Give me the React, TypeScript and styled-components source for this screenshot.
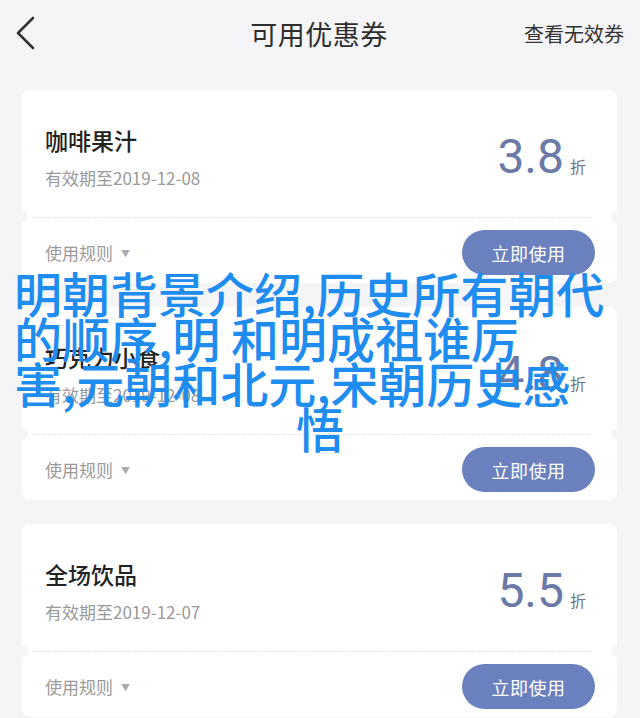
import React from "react";
import styled, { createGlobalStyle } from "styled-components";

const GlobalStyle = createGlobalStyle`
  html, body { margin: 0; padding: 0; background: #f5f5f7; }
  body { font-family: "Noto Sans CJK SC", "Noto Sans", sans-serif; }
  * { box-sizing: border-box; }
`;

const Page = styled.div`
  position: relative;
  width: 640px;
  height: 718px;
  overflow: hidden;
  background: #f5f5f7;
`;

const Header = styled.header`
  height: 66px;
  display: grid;
  grid-template-columns: 120px 1fr 120px;
  align-items: center;
  padding: 0 16px 0 14px;
`;

const BackButton = styled.button`
  width: 30px;
  height: 36px;
  padding: 0;
  border: 0;
  background: transparent;
  display: flex;
  align-items: center;
  justify-content: flex-start;
`;

const Title = styled.h1`
  margin: 0;
  text-align: center;
  font-size: 27px;
  font-weight: 400;
  color: #2e2e2e;
  letter-spacing: 0.5px;
`;

const HeaderLink = styled.span`
  text-align: right;
  font-size: 20px;
  color: #333;
  white-space: nowrap;
`;

const List = styled.main`
  display: flex;
  flex-direction: column;
  gap: 24px;
  padding: 24px 23px 0 22px;
`;

const Card = styled.section`
  position: relative;
  height: 193px;
  flex-shrink: 0;
  background: #fff;
  border-radius: 8px;
  display: flex;
  flex-direction: column;
`;

const CardTop = styled.div`
  height: 127px;
  display: flex;
  align-items: flex-start;
  justify-content: space-between;
  padding: 35px 31px 0 23px;
`;

const Info = styled.div`
  display: flex;
  flex-direction: column;
  gap: 11px;
`;

const Name = styled.div`
  font-size: 23px;
  line-height: 30px;
  color: #222;
  font-weight: 500;
`;

const Expiry = styled.div`
  font-size: 17px;
  line-height: 24px;
  color: #9a9a9a;
`;

const Price = styled.div`
  display: flex;
  align-items: baseline;
  gap: 6px;
  margin-top: 8px;
  color: #6b7aa6;
`;

const Amount = styled.span`
  font-family: "Roboto", "Liberation Sans", sans-serif;
  font-size: 48px;
  line-height: 48px;
  font-weight: 400;
`;

const Unit = styled.span`
  font-size: 16px;
  color: #6f7280;
`;

const Divider = styled.div`
  margin: 0 27px 0 11px;
  border-top: 1px dashed #e4e4e6;
`;

const Notch = styled.span<{ $side: "left" | "right" }>`
  position: absolute;
  top: 127px;
  ${(p) => (p.$side === "left" ? "left: -6px;" : "right: -6px;")}
  width: 12px;
  height: 12px;
  margin-top: -6px;
  border-radius: 50%;
  background: #f5f5f7;
`;

const CardFooter = styled.div`
  display: flex;
  align-items: center;
  justify-content: space-between;
  padding: 12px 22px 0 23px;
`;

const Rules = styled.span`
  display: flex;
  align-items: center;
  gap: 8px;
  font-size: 17px;
  color: #9a9a9a;
`;

const Caret = styled.span`
  font-size: 9px;
  color: #aaa;
  transform: translateY(1px);
`;

const UseButton = styled.button`
  width: 133px;
  height: 45px;
  border: 0;
  border-radius: 23px;
  background: #6b80be;
  color: #fff;
  font-family: inherit;
  font-size: 18px;
  letter-spacing: 0.5px;
`;

const Overlay = styled.div`
  position: absolute;
  left: 14px;
  top: 270px;
  width: 612px;
  color: #1f8cf0;
  font-size: 48px;
  line-height: 45px;
  font-weight: 500;
  pointer-events: none;
`;

const OverlayLine = styled.div<{ $center?: boolean }>`
  white-space: nowrap;
  text-align: ${(p) => (p.$center ? "center" : "left")};
`;

const coupons = [
  { name: "咖啡果汁", date: "2019-12-08", amount: "3.8" },
  { name: "巧克力小食", date: "2019-12-08", amount: "4.8" },
  { name: "全场饮品", date: "2019-12-07", amount: "5.5" },
];

export default function App() {
  return (
    <Page>
      <GlobalStyle />
      <Header>
        <BackButton aria-label="返回">
          <svg width="22" height="34" viewBox="0 0 22 34" fill="none">
            <path d="M19 2 L4 17 L19 32" stroke="#333" strokeWidth="2.6" strokeLinecap="round" strokeLinejoin="round" />
          </svg>
        </BackButton>
        <Title>可用优惠券</Title>
        <HeaderLink>查看无效券</HeaderLink>
      </Header>
      <List>
        {coupons.map((c) => (
          <Card key={c.name}>
            <CardTop>
              <Info>
                <Name>{c.name}</Name>
                <Expiry>有效期至{c.date}</Expiry>
              </Info>
              <Price>
                <Amount>{c.amount}</Amount>
                <Unit>折</Unit>
              </Price>
            </CardTop>
            <Divider />
            <Notch $side="left" />
            <Notch $side="right" />
            <CardFooter>
              <Rules>
                使用规则<Caret>▼</Caret>
              </Rules>
              <UseButton>立即使用</UseButton>
            </CardFooter>
          </Card>
        ))}
      </List>
      <Overlay>
        <OverlayLine>明朝背景介绍,历史所有朝代</OverlayLine>
        <OverlayLine>的顺序,明&nbsp;和明成祖谁厉</OverlayLine>
        <OverlayLine>害,元朝和北元,宋朝历史感</OverlayLine>
        <OverlayLine $center>悟</OverlayLine>
      </Overlay>
    </Page>
  );
}
